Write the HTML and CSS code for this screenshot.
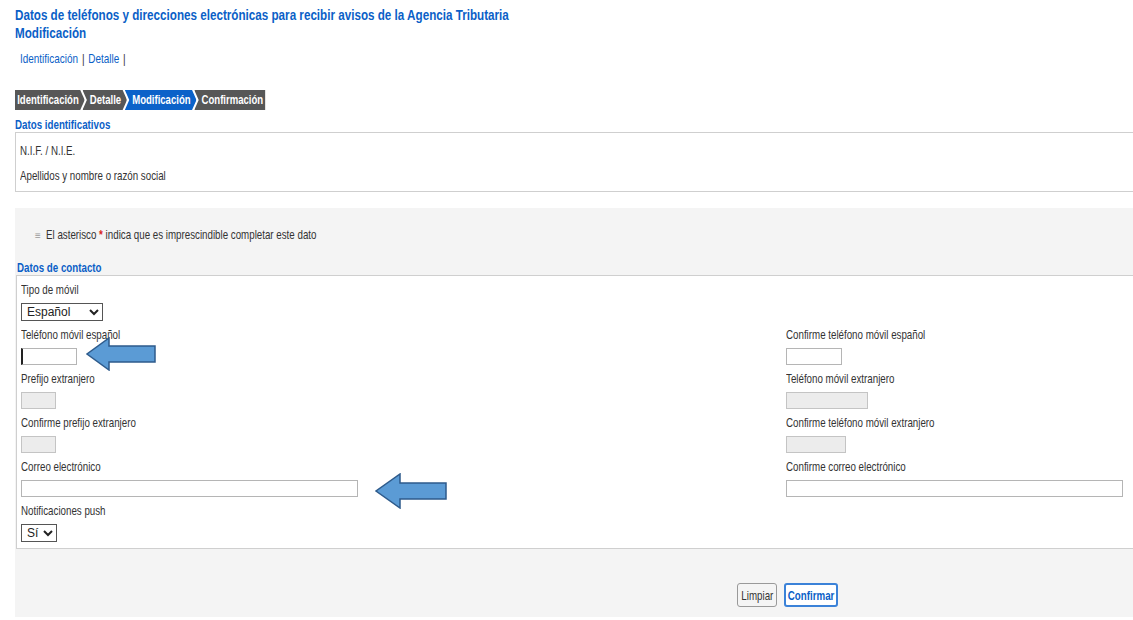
FILE: index.html
```html
<!DOCTYPE html>
<html lang="es">
<head>
    <meta charset="UTF-8">
    <title>Datos de teléfonos y direcciones electrónicas</title>
    <link rel="stylesheet" href="styles.css">
</head>
<body>
    <div class="page">
        <h1 class="title">Datos de teléfonos y direcciones electrónicas para recibir avisos de la Agencia Tributaria<br>Modificación</h1>

        <div class="crumbs">
            <a href="#">Identificación</a><span class="sep">|</span><a href="#">Detalle</a><span class="sep">|</span>
        </div>

        <ol class="steps">
            <li class="step first">Identificación</li>
            <li class="step">Detalle</li>
            <li class="step active">Modificación</li>
            <li class="step last">Confirmación</li>
        </ol>

        <h2 class="section-title">Datos identificativos</h2>
        <div class="id-box">
            <p>N.I.F. / N.I.E.</p>
            <p>Apellidos y nombre o razón social</p>
        </div>

        <div class="panel">
            <p class="note"><span class="bullet">&#8801;</span><span class="note-text">El asterisco <span class="req">*</span> indica que es imprescindible completar este dato</span></p>

            <h2 class="section-title contact">Datos de contacto</h2>
            <div class="contact-box">
                <div class="field">
                    <label for="tipo">Tipo de móvil</label>
                    <select id="tipo" class="sel-tipo"><option>Español</option></select>
                </div>
                <div class="field empty"></div>

                <div class="field">
                    <label for="movil">Teléfono móvil español</label>
                    <input type="text" id="movil" class="w55 caret">
                    <svg class="arrow arrow-1" width="72" height="34" viewBox="0 0 72 34">
                        <polygon points="70,9 24,9 24,1 2,17 24,33 24,25 70,25" fill="#5b9bd5" stroke="#2e5b8c" stroke-width="1.5"/>
                    </svg>
                </div>
                <div class="field">
                    <label for="movil2">Confirme teléfono móvil español</label>
                    <input type="text" id="movil2" class="w55">
                </div>

                <div class="field">
                    <label for="prefijo">Prefijo extranjero</label>
                    <input type="text" id="prefijo" class="w34" disabled>
                </div>
                <div class="field">
                    <label for="movilext">Teléfono móvil extranjero</label>
                    <input type="text" id="movilext" class="w81" disabled>
                </div>

                <div class="field">
                    <label for="prefijo2">Confirme prefijo extranjero</label>
                    <input type="text" id="prefijo2" class="w34" disabled>
                </div>
                <div class="field">
                    <label for="movilext2">Confirme teléfono móvil extranjero</label>
                    <input type="text" id="movilext2" class="w59" disabled>
                </div>

                <div class="field">
                    <label for="correo">Correo electrónico</label>
                    <input type="text" id="correo" class="w337">
                    <svg class="arrow arrow-2" width="74" height="36" viewBox="0 0 74 36">
                        <polygon points="72,10 26,10 26,1 2,18 26,35 26,26 72,26" fill="#5b9bd5" stroke="#2e5b8c" stroke-width="1.5"/>
                    </svg>
                </div>
                <div class="field">
                    <label for="correo2">Confirme correo electrónico</label>
                    <input type="text" id="correo2" class="w337">
                </div>

                <div class="field">
                    <label for="push">Notificaciones push</label>
                    <select id="push" class="sel-push"><option>Sí</option></select>
                </div>
            </div>

            <div class="actions">
                <button type="button" class="btn btn-clear"><span>Limpiar</span></button>
                <button type="button" class="btn primary"><span>Confirmar</span></button>
            </div>
        </div>
    </div>
</body>
</html>
```

FILE: styles.css
```css
body {
    margin: 0;
    padding: 0;
    background-color: #fff;
    font-family: "Liberation Sans", Arial, sans-serif;
    font-size: 13px;
    color: #333;
}

/* the screenshot text is narrow, squeeze it horizontally */
.title,
.crumbs,
.section-title,
.id-box p,
.note-text,
.field label,
.btn span {
    transform: scaleX(0.75);
    transform-origin: 0 50%;
    white-space: nowrap;
}

.page {
    padding: 6px 0 0 15px;
}

.title {
    margin: 0;
    font-size: 15px;
    line-height: 18px;
    font-weight: bold;
    color: #0b5fc7;
    transform: scaleX(0.777);
}

.crumbs {
    margin: 9px 0 0 5px;
    line-height: 16px;
    color: #333;
    transform: scaleX(0.765);
}

.crumbs a {
    color: #0b5fc7;
    text-decoration: none;
}

.crumbs .sep {
    margin: 0 5px;
}

.steps {
    list-style: none;
    margin: 23px 0 0 0;
    padding: 0;
    display: flex;
    height: 20px;
    font-size: 13px;
    transform: scaleX(0.735);
    transform-origin: 0 50%;
}

.step {
    background-color: #575757;
    color: #fff;
    font-weight: bold;
    line-height: 20px;
    padding: 0 8px 0 10px;
    margin-right: -3px;
    clip-path: polygon(0 0, calc(100% - 6px) 0, 100% 50%, calc(100% - 6px) 100%, 0 100%, 6px 50%);
}

.step.first {
    padding-left: 3px;
    clip-path: polygon(0 0, calc(100% - 6px) 0, 100% 50%, calc(100% - 6px) 100%, 0 100%);
}

.step.last {
    padding-right: 3px;
    clip-path: polygon(0 0, 100% 0, 100% 100%, 0 100%, 6px 50%);
}

.step.active {
    background-color: #0b62c9;
}

.section-title {
    margin: 8px 0 0 0;
    font-size: 13px;
    line-height: 14px;
    font-weight: bold;
    color: #0b5fc7;
}

.id-box {
    border: 1px solid #cfcfcf;
    border-right: none;
    height: 58px;
    padding: 0 0 0 4px;
    background: #fff;
}

.id-box p {
    margin: 0;
    line-height: 25px;
}

.id-box p:first-child {
    margin-top: 5px;
}

.panel {
    margin-top: 16px;
    background-color: #f4f4f4;
    padding: 19px 0 10px 0;
}

.note {
    margin: 0 0 0 20px;
    line-height: 16px;
}

.note-text {
    display: inline-block;
}

.bullet {
    color: #999;
    font-size: 10px;
    margin-right: 5px;
}

.req {
    color: #d9261c;
    font-weight: bold;
}

.section-title.contact {
    margin: 17px 0 0 2px;
}

.contact-box {
    margin-left: 1px;
    border: 1px solid #cfcfcf;
    border-right: none;
    background: #fff;
    padding: 7px 0 6px 4px;
    display: grid;
    grid-template-columns: 765px 1fr;
    row-gap: 7px;
}

.field {
    position: relative;
    display: flex;
    flex-direction: column;
    align-items: flex-start;
}

.field label {
    display: inline-block;
    line-height: 14px;
    margin-bottom: 6px;
}

.field input {
    box-sizing: border-box;
    height: 17px;
    margin: 0;
    padding: 0 2px;
    border: 1px solid #b5b5b5;
    background: #fff;
    font: inherit;
}

.field input:disabled {
    background-color: #ececec;
    border-color: #c4c4c4;
}

.field input.caret {
    border-left: 2px solid #222;
}

.w34 { width: 35px; }
.w55 { width: 56px; }
.w59 { width: 60px; }
.w81 { width: 82px; }
.w337 { width: 337px; }

.field select {
    box-sizing: border-box;
    height: 18px;
    margin: 0;
    padding: 0 0 0 1px;
    border: 1px solid #555;
    border-radius: 0;
    background: #fff;
    font-family: inherit;
    font-size: 12px;
    color: #222;
}

.sel-tipo { width: 82px; }
.sel-push { width: 36px; }

.arrow {
    position: absolute;
}

.arrow-1 {
    left: 64px;
    top: 9px;
}

.arrow-2 {
    left: 353px;
    top: 13px;
}

.actions {
    display: flex;
    gap: 7px;
    margin: 34px 0 0 722px;
}

.btn {
    font-family: inherit;
    font-size: 13px;
    width: 40px;
    height: 24px;
    padding: 0;
    border: 1px solid #999;
    border-radius: 3px;
    background: #f4f4f4;
    color: #333;
    display: flex;
    align-items: center;
    justify-content: center;
}

.btn span {
    display: inline-block;
    transform-origin: 50% 50%;
}

.btn.primary {
    width: 54px;
    border: 2px solid #3b82d8;
    background: #fff;
    color: #0b5fc7;
    font-weight: bold;
}
```
